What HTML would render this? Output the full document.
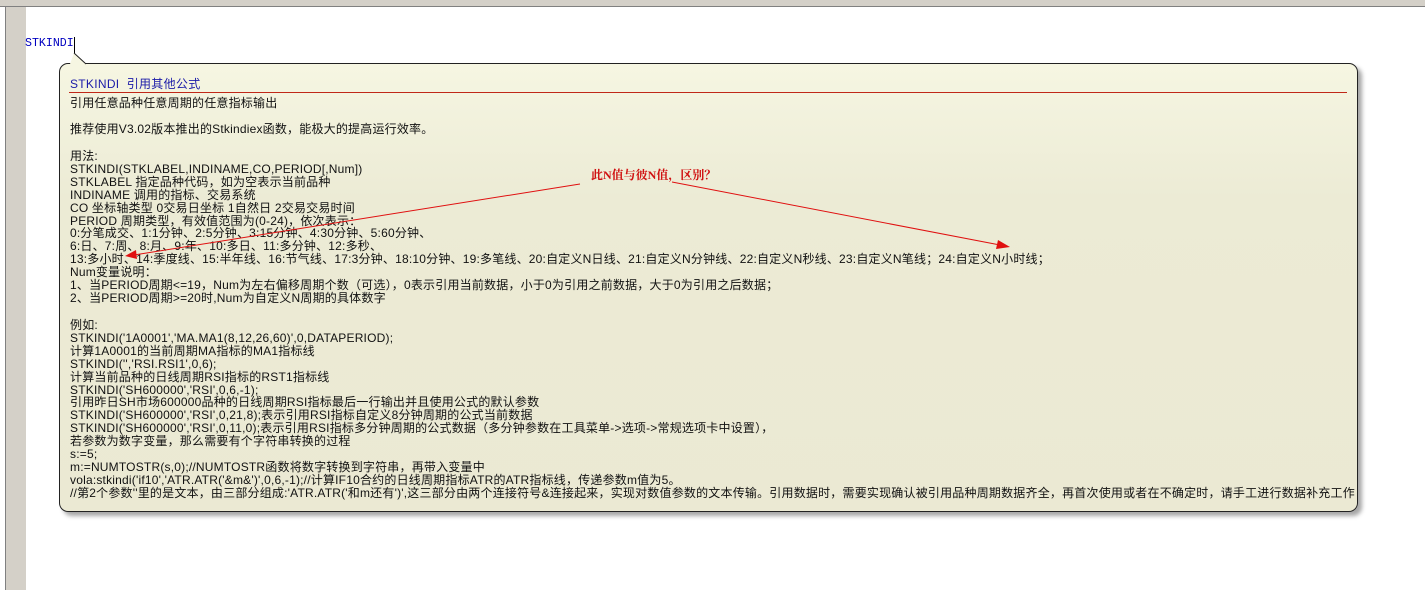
<!DOCTYPE html>
<html><head><meta charset="utf-8"><style>
body{margin:0;width:1425px;height:590px;background:#fff;position:relative;overflow:hidden;font-family:"Liberation Sans","Noto Sans CJK SC",sans-serif;}
.topbar{position:absolute;left:0;top:0;width:1425px;height:6px;background:#d4d0c8;border-bottom:1px solid #808080;}
.lstrip{position:absolute;left:5px;top:7px;width:20px;height:583px;background:#d4d0c8;border-left:1px solid #808080;}
.ledge{position:absolute;left:0;top:7px;width:4px;height:583px;background:#fff;}
.code{position:absolute;left:25px;top:37px;font-family:"Liberation Mono",monospace;font-size:11.6px;color:#0000c0;}
.caret{position:absolute;left:74px;top:37px;width:1px;height:16px;background:#000;}
.box{position:absolute;left:59px;top:63px;width:1297px;height:447px;border:1px solid #222;border-radius:9px;background:linear-gradient(#f6f6e2,#ecebd5 30%,#ebe9d3);box-shadow:4px 4px 4px rgba(0,0,0,.35);}
.t{position:absolute;left:70px;font-size:12px;letter-spacing:0.2px;color:#111;white-space:pre;line-height:12.9px;}
.title{position:absolute;left:70px;top:75px;font-size:12px;letter-spacing:0.3px;color:#1a1aa8;}
.rule{position:absolute;left:69px;top:92px;width:1278px;height:1px;background:#c02818;}
.note{position:absolute;left:591px;top:166px;font-size:12px;font-weight:bold;color:#d01010;font-family:"Liberation Serif","Noto Serif CJK SC",serif;}
</style></head><body>
<div class="topbar"></div><div class="ledge"></div><div class="lstrip"></div>
<div class="code">STKINDI</div><div class="caret"></div>
<div class="box"></div>
<svg style="position:absolute;left:0;top:0" width="1425" height="590"><path d="M74 53 L86 64 L70 64 Z" fill="#f6f6e2" stroke="none"/><path d="M74 53 L86 64" stroke="#222" fill="none"/></svg>
<div class="title">STKINDI&nbsp; 引用其他公式</div>
<div class="rule"></div>
<div class="t" style="top:97px">引用任意品种任意周期的任意指标输出</div>
<div class="t" style="top:123px">推荐使用V3.02版本推出的Stkindiex函数，能极大的提高运行效率。</div>
<div class="t" style="top:150px">用法:
STKINDI(STKLABEL,INDINAME,CO,PERIOD[,Num])
STKLABEL 指定品种代码，如为空表示当前品种
INDINAME 调用的指标、交易系统
CO 坐标轴类型 0交易日坐标 1自然日 2交易交易时间
PERIOD 周期类型，有效值范围为(0-24)，依次表示：
0:分笔成交、1:1分钟、2:5分钟、3:15分钟、4:30分钟、5:60分钟、
6:日、7:周、8:月、9:年、10:多日、11:多分钟、12:多秒、
13:多小时、14:季度线、15:半年线、16:节气线、17:3分钟、18:10分钟、19:多笔线、20:自定义N日线、21:自定义N分钟线、22:自定义N秒线、23:自定义N笔线；24:自定义N小时线；
Num变量说明：
1、当PERIOD周期&lt;=19，Num为左右偏移周期个数（可选），0表示引用当前数据，小于0为引用之前数据，大于0为引用之后数据；
2、当PERIOD周期&gt;=20时,Num为自定义N周期的具体数字</div>
<div class="t" style="top:319px">例如:
STKINDI('1A0001','MA.MA1(8,12,26,60)',0,DATAPERIOD);
计算1A0001的当前周期MA指标的MA1指标线
STKINDI('','RSI.RSI1',0,6);
计算当前品种的日线周期RSI指标的RST1指标线
STKINDI('SH600000','RSI',0,6,-1);
引用昨日SH市场600000品种的日线周期RSI指标最后一行输出并且使用公式的默认参数
STKINDI('SH600000','RSI',0,21,8);表示引用RSI指标自定义8分钟周期的公式当前数据
STKINDI('SH600000','RSI',0,11,0);表示引用RSI指标多分钟周期的公式数据（多分钟参数在工具菜单-&gt;选项-&gt;常规选项卡中设置），
若参数为数字变量，那么需要有个字符串转换的过程
s:=5;
m:=NUMTOSTR(s,0);//NUMTOSTR函数将数字转换到字符串，再带入变量中
vola:stkindi('if10','ATR.ATR('&amp;m&amp;')',0,6,-1);//计算IF10合约的日线周期指标ATR的ATR指标线，传递参数m值为5。
//第2个参数''里的是文本，由三部分组成:'ATR.ATR('和m还有')',这三部分由两个连接符号&amp;连接起来，实现对数值参数的文本传输。引用数据时，需要实现确认被引用品种周期数据齐全，再首次使用或者在不确定时，请手工进行数据补充工作</div>
<div class="note">此N值与彼N值，区别？</div>
<svg style="position:absolute;left:0;top:0" width="1425" height="590">
<line x1="580" y1="184" x2="134" y2="255" stroke="#e01010" stroke-width="1"/>
<polygon points="125,256 136,250 137,259" fill="#e01010"/>
<line x1="672" y1="182" x2="1000" y2="245" stroke="#e01010" stroke-width="1"/>
<polygon points="1010,247 998,240 996,249" fill="#e01010"/>
</svg>
</body></html>
